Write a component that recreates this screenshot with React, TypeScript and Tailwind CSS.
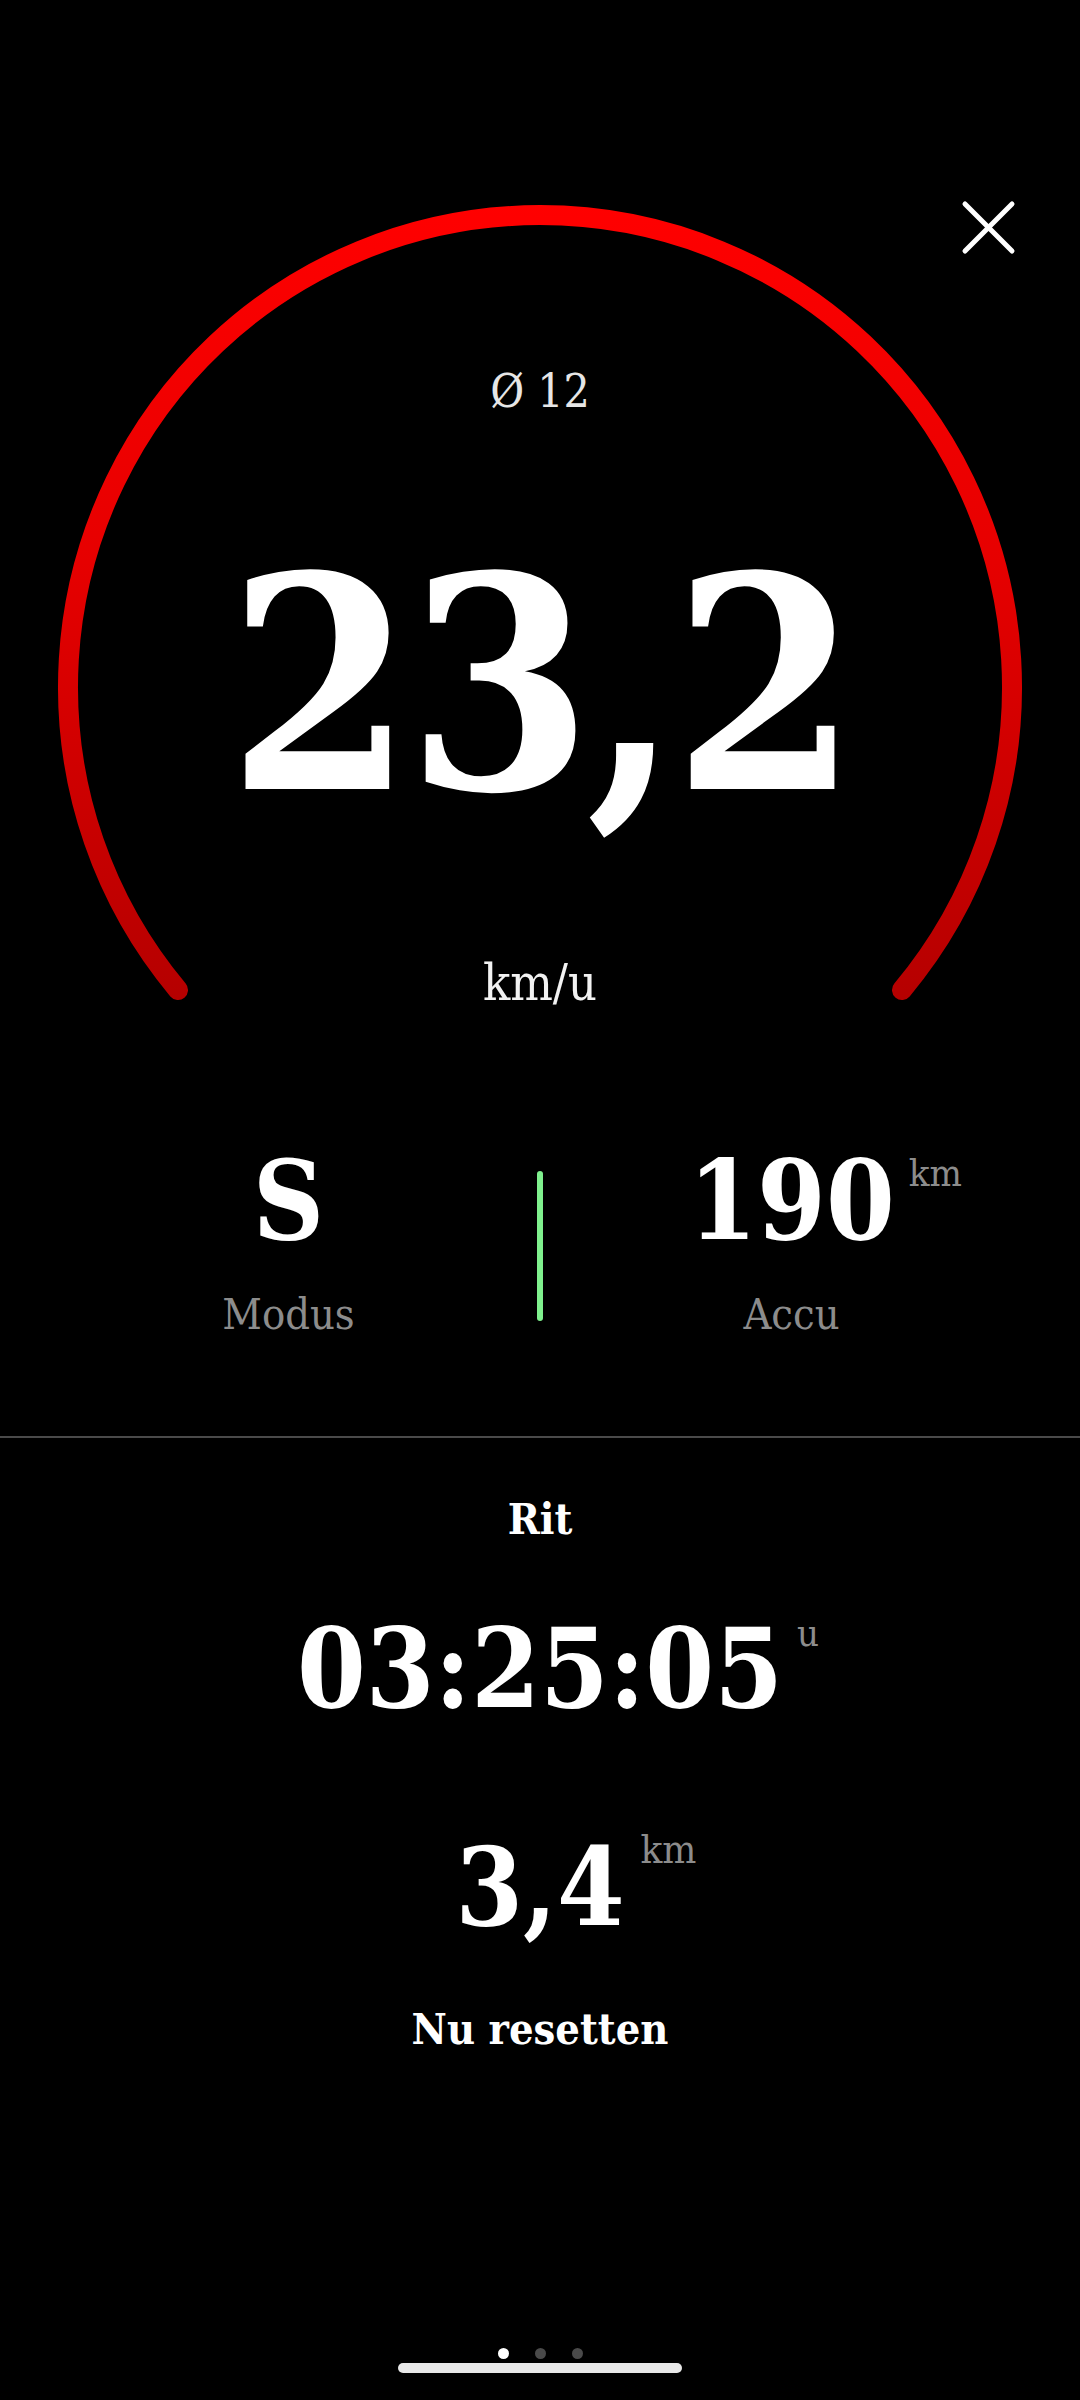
import React from "react";

const F = "font-['DejaVu_Serif',serif] font-stretch-condensed";

function Arc() {
  return (
    <svg
      className="absolute left-0 top-0"
      width={1080}
      height={1010}
      viewBox="0 0 1080 1010"
    >
      <defs>
        <linearGradient id="arcg" x1="0" y1="205" x2="0" y2="1000" gradientUnits="userSpaceOnUse">
          <stop offset="0" stopColor="#ff0000" />
          <stop offset="0.45" stopColor="#e60000" />
          <stop offset="1" stopColor="#b50000" />
        </linearGradient>
      </defs>
      <path
        d="M 178 990 A 472 472 0 1 1 902 990"
        fill="none"
        stroke="url(#arcg)"
        strokeWidth={20}
        strokeLinecap="round"
      />
    </svg>
  );
}

function CloseIcon() {
  return (
    <svg className="absolute left-[960px] top-[199px]" width={57} height={57} viewBox="0 0 57 57">
      <line x1="5" y1="5" x2="52" y2="52" stroke="#ffffff" strokeWidth={5} strokeLinecap="round" />
      <line x1="52" y1="5" x2="5" y2="52" stroke="#ffffff" strokeWidth={5} strokeLinecap="round" />
    </svg>
  );
}

export default function App() {
  return (
    <div className={`w-[1080px] h-[2400px] bg-black text-white flex flex-col overflow-hidden ${F}`}>
      {/* Gauge */}
      <div className="relative w-full flex flex-col items-center pt-[368px]">
        <Arc />
        <CloseIcon />
        <div className="relative text-[46px] leading-none text-[#e6e6e6]">Ø 12</div>
        <div className="relative mt-[123px] text-[296px] leading-none font-bold tracking-[-6px]">23,2</div>
        <div className="relative mt-[125px] text-[50px] leading-none text-[#f2f2f2]">km/u</div>
      </div>

      {/* Stats row */}
      <div className="mt-[138px] px-[40px] grid grid-cols-[1fr_auto_1fr]">
        <div className="flex flex-col items-center">
          <div className="text-[110px] leading-none font-bold">S</div>
          <div className="mt-[37px] text-[43px] leading-none text-[#8c8c8c]">Modus</div>
        </div>
        <div className="mt-[25px] w-[6px] h-[150px] rounded-full bg-[#7ff08e]" />
        <div className="flex flex-col items-center">
          <div className="relative text-[110px] leading-none font-bold">
            190
            <span className="absolute left-[calc(100%+14px)] top-[8px] text-[38px] leading-none font-normal text-[#8c8c8c]">
              km
            </span>
          </div>
          <div className="mt-[37px] text-[43px] leading-none text-[#8c8c8c]">Accu</div>
        </div>
      </div>

      {/* Divider */}
      <div className="mt-[100px] h-[2px] w-full bg-[#4a4a4a]" />

      {/* Ride */}
      <div className="flex flex-col items-center">
        <div className="mt-[60px] text-[43px] leading-none font-bold">Rit</div>
        <div className="relative mt-[73px] text-[110px] leading-none font-bold">
          03:25:05
          <span className="absolute left-[calc(100%+14px)] top-[0px] text-[38px] leading-none font-normal text-[#8c8c8c]">
            u
          </span>
        </div>
        <div className="relative mt-[109px] text-[108px] leading-none font-bold">
          3,4
          <span className="absolute left-[calc(100%+16px)] top-[-4px] text-[40px] leading-none font-normal text-[#8c8c8c]">
            km
          </span>
        </div>
        <div className="mt-[67px] text-[43px] leading-none font-bold">Nu resetten</div>
      </div>

      {/* Bottom */}
      <div className="mt-auto flex flex-col items-center pb-[27px]">
        <div className="flex gap-[26px]">
          <div className="w-[11px] h-[11px] rounded-full bg-white" />
          <div className="w-[11px] h-[11px] rounded-full bg-[#4a4a4a]" />
          <div className="w-[11px] h-[11px] rounded-full bg-[#4a4a4a]" />
        </div>
        <div className="mt-[4px] w-[284px] h-[10px] rounded-full bg-[#e8e8e8]" />
      </div>
    </div>
  );
}
